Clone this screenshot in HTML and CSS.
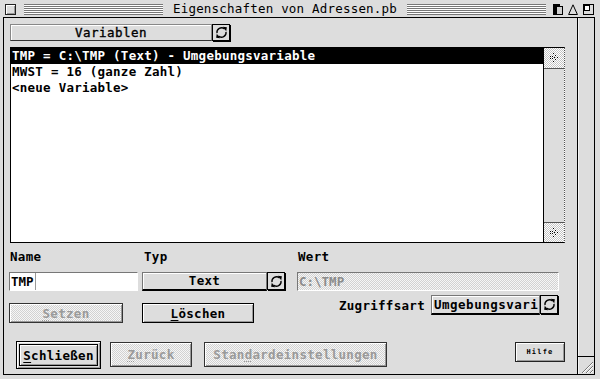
FILE: index.html
```html
<!DOCTYPE html>
<html>
<head>
<meta charset="utf-8">
<link rel="stylesheet" href="styles.css">
</head>
<body>
<div class="window">
  <div class="titlebar">
    <span class="closebox"></span>
    <span class="stripes"></span>
    <span class="title">Eigenschaften von Adressen.pb</span>
    <span class="stripes"></span>
    <span class="tb-icons">
      <svg class="tb-collapse" width="10" height="11" viewBox="0 0 10 11" shape-rendering="crispEdges">
        <rect x="0" y="0" width="7" height="11" fill="#000"/>
        <rect x="3.5" y="2.5" width="6" height="8" fill="#cfcfcf" stroke="#000"/>
      </svg>
      <svg class="tb-tri" width="10" height="11" viewBox="0 0 10 11">
        <polygon points="5,0.8 9.4,10.5 0.6,10.5" fill="#ddd" stroke="#000" stroke-width="1"/>
      </svg>
      <svg class="tb-zoom" width="11" height="11" viewBox="0 0 11 11" shape-rendering="crispEdges">
        <rect x="0.5" y="0.5" width="10" height="10" fill="#ddd" stroke="#000"/>
        <rect x="1.5" y="1.5" width="5" height="5" fill="#fff" stroke="#000"/>
      </svg>
    </span>
  </div>
  <div class="frame-wrap">
    <div class="frame">
      <div class="content">
        <div class="popup popup-var">
          <div class="pbtn">Variablen</div>
          <div class="picon">
            <svg width="13" height="13" viewBox="0 0 13 13"><g fill="none" stroke="#000" stroke-width="1.3"><path d="M2 7.2A4.6 4.6 0 0 1 9.6 3"/><path d="M11 5.8A4.6 4.6 0 0 1 3.4 10"/></g><path d="M7.8 0.8L11.9 1.2L11.2 5.2Z"/><path d="M5.2 12.2L1.1 11.8L1.8 7.8Z"/></svg>
          </div>
        </div>

        <div class="listbox">
          <div class="items">
            <div class="item sel">TMP = C:\TMP (Text) - Umgebungsvariable</div>
            <div class="item">MWST = 16 (ganze Zahl)</div>
            <div class="item">&lt;neue Variable&gt;</div>
          </div>
          <div class="vscroll">
            <div class="arrow arrow-top">
              <svg width="10" height="10" viewBox="0 0 10 10" shape-rendering="crispEdges" fill="#000"><rect x="4" y="0" width="1" height="1"/><rect x="6" y="2" width="1" height="1"/><rect x="8" y="4" width="1" height="1"/><rect x="6" y="6" width="1" height="1"/><rect x="4" y="8" width="1" height="1"/><rect x="1" y="3" width="1" height="1"/><rect x="3" y="3" width="1" height="1"/><rect x="1" y="5" width="1" height="1"/><rect x="3" y="5" width="1" height="1"/><rect x="5" y="4" width="1" height="1"/></svg>
            </div>
            <div class="track"></div>
            <div class="arrow arrow-bot">
              <svg width="10" height="10" viewBox="0 0 10 10" shape-rendering="crispEdges" fill="#000"><rect x="4" y="0" width="1" height="1"/><rect x="6" y="2" width="1" height="1"/><rect x="8" y="4" width="1" height="1"/><rect x="6" y="6" width="1" height="1"/><rect x="4" y="8" width="1" height="1"/><rect x="1" y="3" width="1" height="1"/><rect x="3" y="3" width="1" height="1"/><rect x="1" y="5" width="1" height="1"/><rect x="3" y="5" width="1" height="1"/><rect x="5" y="4" width="1" height="1"/></svg>
            </div>
          </div>
        </div>

        <div class="labels">
          <span class="lbl lbl-name">Name</span>
          <span class="lbl lbl-typ">Typ</span>
          <span class="lbl">Wert</span>
        </div>

        <div class="fields">
          <div class="field name-field"><span class="val">TMP</span></div>
          <div class="popup popup-typ">
            <div class="pbtn">Text</div>
            <div class="picon">
              <svg width="13" height="13" viewBox="0 0 13 13"><g fill="none" stroke="#000" stroke-width="1.3"><path d="M2 7.2A4.6 4.6 0 0 1 9.6 3"/><path d="M11 5.8A4.6 4.6 0 0 1 3.4 10"/></g><path d="M7.8 0.8L11.9 1.2L11.2 5.2Z"/><path d="M5.2 12.2L1.1 11.8L1.8 7.8Z"/></svg>
            </div>
          </div>
          <div class="field wert-field">C:\TMP</div>
        </div>

        <div class="actions">
          <div class="btn disabled btn-setzen"><u>S</u>etzen</div>
          <div class="btn btn-loeschen"><u>L</u>öschen</div>
          <div class="zugriff">
            <span class="lbl">Zugriffsart</span>
            <div class="popup popup-zug">
              <div class="pbtn">Umgebungsvari</div>
              <div class="picon">
                <svg width="13" height="13" viewBox="0 0 13 13"><g fill="none" stroke="#000" stroke-width="1.3"><path d="M2 7.2A4.6 4.6 0 0 1 9.6 3"/><path d="M11 5.8A4.6 4.6 0 0 1 3.4 10"/></g><path d="M7.8 0.8L11.9 1.2L11.2 5.2Z"/><path d="M5.2 12.2L1.1 11.8L1.8 7.8Z"/></svg>
              </div>
            </div>
          </div>
        </div>

        <div class="bottom">
          <div class="default-ring"><div class="btn btn-close"><u>S</u>chließen</div></div>
          <div class="btn disabled btn-zurueck"><u>Z</u>urück</div>
          <div class="btn disabled btn-std">Stan<u>d</u>ardeinstellungen</div>
          <div class="btn btn-hilfe">Hilfe</div>
        </div>
      </div>
      <div class="rightcol">
        <div class="rc-track"></div>
        <div class="growbox">
          <svg width="16" height="17" viewBox="0 0 16 17" shape-rendering="crispEdges">
            <g stroke="#777" stroke-width="1"><line x1="4" y1="16" x2="15" y2="5"/><line x1="8" y1="16" x2="15" y2="9"/><line x1="12" y1="16" x2="15" y2="13"/></g>
            <g stroke="#fff" stroke-width="1"><line x1="5" y1="16" x2="15" y2="6"/><line x1="9" y1="16" x2="15" y2="10"/><line x1="13" y1="16" x2="15" y2="14"/></g>
          </svg>
        </div>
      </div>
    </div>
  </div>
</div>
</body>
</html>
```

FILE: styles.css
```css
* { box-sizing: border-box; }
html, body { margin: 0; padding: 0; }
body {
  width: 600px;
  height: 379px;
  overflow: hidden;
  background: #dddddd;
  font-family: "DejaVu Sans Mono", "Liberation Mono", monospace;
  font-size: 12.5px;
  color: #000;
}
.window { width: 600px; height: 379px; display: flex; flex-direction: column; }

/* title bar */
.titlebar { height: 17px; flex: none; display: flex; align-items: flex-start; padding: 0 6px 0 5px; }
.closebox {
  flex: none; width: 11px; height: 11px; margin-top: 4px; margin-right: 8px;
  border: 1px solid #222; background: #ddd;
  box-shadow: inset 1px 1px #fff, inset -1px -1px #999;
}
.stripes {
  flex: 1; height: 11px; margin-top: 4px;
  background: repeating-linear-gradient(to bottom, #777 0 1px, #fff 1px 2px);
}
.title { flex: none; width: 244px; text-align: center; line-height: 17px; letter-spacing: 0.2px; white-space: pre; }
.tb-icons { flex: none; width: 48px; display: flex; align-items: flex-start; padding-left: 7px; margin-top: 4px; gap: 5px; }
.tb-icons svg { display: block; flex: none; }

/* frame */
.frame-wrap { flex: 1; display: flex; padding: 0 5px 4px 3px; }
.frame { flex: 1; display: flex; border: 1px solid #000; }
.content { flex: 1; display: flex; flex-direction: column; align-items: flex-start; padding: 6px 0 0 6px; }
.rightcol { flex: none; width: 17px; border-left: 1px solid #000; display: flex; flex-direction: column; box-shadow: inset 1px 0 #f4f4f4; }
.rc-track { flex: 1; }
.growbox { flex: none; height: 18px; border-top: 1px solid #000; }
.growbox svg { display: block; }

/* popups */
.popup { display: flex; flex: none; align-items: flex-start; }
.pbtn {
  height: 19px; border: 1px solid #777; border-bottom: 2px solid #000;
  background: #ddd; box-shadow: inset 1px 1px #fff;
  text-align: center; font-weight: bold; line-height: 16px; letter-spacing: 0.3px; white-space: pre; overflow: hidden;
}
.picon {
  width: 18px; height: 18px; border: 1px solid #000; box-shadow: 1px 1px 0 #000;
  background: #ddd; display: flex; align-items: center; justify-content: center;
}
.picon svg { display: block; }
.popup-var .pbtn { width: 202px; height: 17px; border-color: #888; border-bottom: 1px solid #333; line-height: 15px; font-weight: normal; -webkit-text-stroke: 0.35px #000; letter-spacing: 0.5px; }
.popup-var .picon { width: 18px; height: 17px; }
.popup-typ { margin-left: 4px; }
.popup-typ .pbtn { width: 125px; }
.popup-zug { margin-left: 6px; }
.popup-zug .pbtn { width: 109px; height: 20px; text-align: left; padding-left: 2px; line-height: 17px; letter-spacing: 0.5px; }
.popup-zug .picon { height: 19px; }

/* list */
.listbox {
  flex: none; margin-top: 6px; width: 555px; height: 196px;
  border: 1px solid #000; border-right: 1px dotted #555;
  display: flex; background: #fff;
}
.items { flex: 1; }
.item { height: 16px; line-height: 16px; padding-left: 1px; font-weight: bold; white-space: pre; letter-spacing: 0.25px; }
.item.sel { background: #000; color: #fff; }
.vscroll { flex: none; width: 21px; border-left: 1px solid #000; display: flex; flex-direction: column; background: #ddd; }
.arrow {
  flex: none; display: flex; align-items: center; justify-content: center;
  background-image: repeating-conic-gradient(#fff 0% 25%, #c4c4c4 0% 50%);
  background-size: 2px 2px;
}
.arrow-top { height: 21px; border-bottom: 1px solid #555; }
.arrow-bot { height: 20px; border-top: 1px solid #555; }
.arrow svg { display: block; }
.track { flex: 1; }

/* labels & fields */
.labels { display: flex; margin-top: 6px; height: 16px; line-height: 16px; }
.lbl { font-weight: bold; letter-spacing: 0.3px; white-space: pre; }
.lbl-name { width: 134px; }
.lbl-typ { width: 154px; }

.fields { display: flex; align-items: flex-start; margin-top: 7px; }
.field {
  height: 19px; border-top: 1px solid #777; border-left: 1px solid #777;
  border-bottom: 1px solid #fff; border-right: 1px solid #fff;
  line-height: 17px; white-space: pre;
}
.name-field { margin-left: -1px; width: 129px; background: #fff; padding-left: 1px; }
.name-field .val { display: inline-block; font-weight: bold; height: 17px; border-right: 1px solid #999; padding-right: 1px; }
.wert-field {
  margin-left: 12px; width: 262px; padding-left: 1px; color: #8c8c8c; font-weight: bold;
  background-image: repeating-conic-gradient(#f6f6f6 0% 25%, #d2d2d2 0% 50%);
  background-size: 2px 2px;
}

/* buttons */
.btn {
  flex: none; display: flex; align-items: center; justify-content: center;
  border: 1px solid #000; background: #ddd;
  box-shadow: inset 1px 1px #fff, inset -1px -1px #999;
  font-weight: bold; letter-spacing: 0.3px; white-space: pre;
}
.btn u { text-decoration-thickness: 1px; text-underline-offset: 2px; }
.btn.disabled {
  color: #9a9a9a; border-color: #333;
  background-image: repeating-conic-gradient(#f6f6f6 0% 25%, #d2d2d2 0% 50%);
  background-size: 2px 2px;
}
.btn.disabled u { text-decoration-style: dotted; }

.actions { display: flex; align-items: flex-start; margin-top: 4px; width: 548px; }
.btn-setzen { margin-top: 8px; margin-left: -1px; width: 114px; height: 20px; }
.btn-loeschen { margin-top: 8px; margin-left: 19px; width: 112px; height: 20px; }
.zugriff { margin-left: auto; display: flex; align-items: center; height: 20px; }

.bottom { display: flex; align-items: flex-start; margin-top: 18px; }
.default-ring {
  flex: none; margin-left: 6px; width: 85px; height: 28px; padding: 2px;
  border: 1px solid #000; background: #ddd;
  box-shadow: inset 1px 1px #fff, inset -1px -1px #999;
}
.btn-close { width: 100%; height: 100%; }
.btn-zurueck { margin-left: 9px; margin-top: 1px; width: 82px; height: 25px; }
.btn-std { margin-left: 12px; margin-top: 1px; width: 183px; height: 25px; }
.btn-hilfe { margin-left: 128px; margin-top: 1px; width: 50px; height: 20px; font-size: 7px; letter-spacing: 1.2px; border-color: #222; }
```
